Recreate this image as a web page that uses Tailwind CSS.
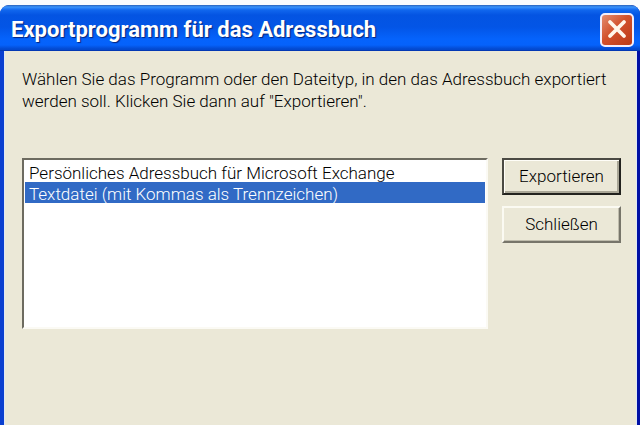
<!DOCTYPE html>
<html lang="de">
<head>
  <meta charset="UTF-8" />
  <meta name="viewport" content="width=device-width, initial-scale=1.0"/>
  <title>Exportprogramm für das Adressbuch</title>
  <script src="https://cdn.jsdelivr.net/npm/@tailwindcss/browser@4"></script>
</head>
<body class="bg-[#fafcfd] h-screen flex flex-col pt-[5px] overflow-hidden font-[Roboto,sans-serif] font-light text-[17px] leading-[22px] text-black">

  <!-- Fenster -->
  <div class="flex-1 flex flex-col bg-[linear-gradient(90deg,#0a3fd0_50%,#0010a4_50%)] rounded-t-[9px] overflow-hidden">

    <!-- Titelleiste -->
    <header class="h-[46px] shrink-0 flex items-center justify-between pl-[11px] pr-[6px] pt-1 border-b border-[#0338b4] bg-[linear-gradient(#2a62b8_0px,#3a93fb_2px,#1167ee_5px,#0454e2_10px,#0355e6_22px,#0563fc_34px,#0562fb_40px,#0349cf_44px)]">
      <h1 class="font-bold text-[22px] leading-[26px] text-white whitespace-nowrap [text-shadow:1px_1px_1px_#04237c]">Exportprogramm für das Adressbuch</h1>
      <button type="button" aria-label="Schließen" class="w-[34px] h-[34px] flex items-center justify-center rounded-[5px] border-2 border-[#f3eefb] bg-[linear-gradient(135deg,#e38c70,#d2512c_45%,#bb3a16)]">
        <svg viewBox="0 0 30 30" class="w-[30px] h-[30px]" fill="none" stroke="#fff6ea" stroke-width="3.8" stroke-linecap="round">
          <path d="M8 7 L22 21 M22 7 L8 21"/>
        </svg>
      </button>
    </header>

    <!-- Inhalt -->
    <main class="flex-1 ml-[4px] mr-[3px] pl-[17px] pr-[15px] pt-[17px] bg-[#ebe8d7] border-l border-r border-[#dfe8f5]">
      <p>Wählen Sie das Programm oder den Dateityp, in den das Adressbuch exportiert werden soll. Klicken Sie dann auf "Exportieren".</p>

      <div class="mt-[46px] flex gap-[14px] items-start">
        <select size="8" aria-label="Dateityp" class="flex-1 min-w-0 h-[171px] p-px bg-white rounded-none overflow-hidden outline-none border-2 border-t-[#6d6b60] border-l-[#6d6b60] border-r-[#fbfaf4] border-b-[#fbfaf4]">
          <option class="h-[21px] min-h-[21px] px-1 pt-0.5 pb-0 font-light text-black">Persönliches Adressbuch für Microsoft Exchange</option>
          <option selected class="h-[21px] min-h-[21px] px-1 pt-0.5 pb-0 font-light text-white checked:bg-[linear-gradient(#316ac5,#316ac5)]">Textdatei (mit Kommas als Trennzeichen)</option>
        </select>

        <div class="w-[119px] shrink-0 flex flex-col gap-[11px]">
          <button type="button" class="h-[37px] pb-px border-2 border-[#22221e] border-t-[#4b4a43] border-l-[#4b4a43] shadow-[inset_1px_1px_0_#fffef8,inset_-2px_-2px_0_#aaa797]">Exportieren</button>
          <button type="button" class="h-[37px] pb-px border-2 border-t-[#fbfaf2] border-l-[#fbfaf2] border-r-[#77756a] border-b-[#77756a] shadow-[inset_-1px_-1px_0_#bfbcac]">Schließen</button>
        </div>
      </div>
    </main>

  </div>

</body>
</html>
